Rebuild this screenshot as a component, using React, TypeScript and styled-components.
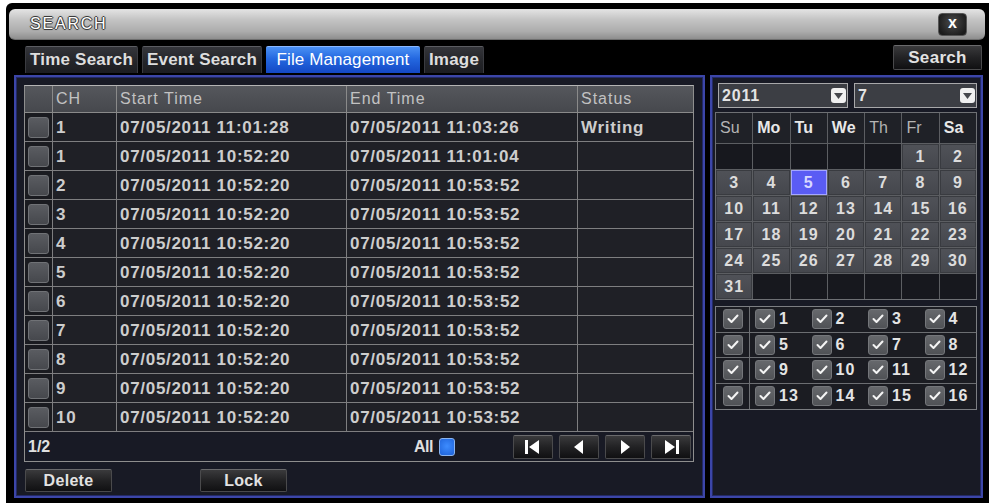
import React from 'react';
import styled, { createGlobalStyle, css } from 'styled-components';

const Global = createGlobalStyle`
  html, body { margin: 0; padding: 0; background: #fff; }
  body { font-family: "Liberation Sans", Arial, sans-serif; overflow: hidden; }
  *, *::before, *::after { box-sizing: border-box; }
`;

const Window = styled.div`
  margin: 3px 0 0 6px;
  width: 983px;
  height: 500px;
  background: #000;
  border-radius: 6px 0 0 0;
  padding: 6px 4px 0 3px;
  display: flex;
  flex-direction: column;
`;

const TitleBar = styled.div`
  height: 31px;
  border-radius: 6px;
  background: linear-gradient(#e4e4e4 0%, #c4c4c4 35%, #acacac 75%, #8e8e8e 100%);
  border-bottom: 1px solid #6e6e6e;
  display: flex;
  align-items: center;
  justify-content: space-between;
  padding: 0 18px 0 21px;
`;

const Title = styled.span`
  font-size: 16px;
  letter-spacing: 1.8px;
  color: #ffffff;
  text-shadow: -1px 0 #3a3a3a, 1px 0 #3a3a3a, 0 -1px #3a3a3a, 0 1px #3a3a3a, 0 0 2px #222;
`;

const CloseButton = styled.div`
  width: 29px;
  height: 23px;
  border-radius: 4px;
  background: radial-gradient(circle at 50% 40%, #4a4a4a, #1c1c1c 80%);
  border: 1px solid #555;
  display: flex;
  align-items: center;
  justify-content: center;
  color: #fff;
  font-weight: bold;
  font-size: 16px;
  line-height: 1;
  padding-bottom: 2px;
`;

const Toolbar = styled.div`
  margin-top: 5px;
  height: 28px;
  display: flex;
  align-items: flex-start;
  padding-left: 16px;
`;

const Tabs = styled.div`
  display: flex;
  gap: 4px;
  margin-top: 1px;
`;

const Tab = styled.div<{ $active?: boolean; $w: number }>`
  width: ${p => p.$w}px;
  height: 27px;
  display: flex;
  align-items: center;
  justify-content: center;
  font-size: 17px;
  white-space: nowrap;
  border-radius: 2px 2px 0 0;
  ${p =>
    p.$active
      ? css`
          background: linear-gradient(#4a90f4 0%, #2468e0 45%, #1448c4 100%);
          color: #fff;
          font-weight: normal;
          letter-spacing: 0.1px;
          border-top: 1px solid #8ab8ff;
        `
      : css`
          background: linear-gradient(#34353a 0%, #232428 60%, #1c1d21 100%);
          color: #dedede;
          font-weight: bold;
          letter-spacing: 0.2px;
          border-top: 1px solid #5c5d62;
          border-left: 1px solid #3a3b40;
          border-right: 1px solid #3a3b40;
        `}
`;

const DarkButton = styled.div<{ $w: number; $h: number }>`
  width: ${p => p.$w}px;
  height: ${p => p.$h}px;
  display: flex;
  align-items: center;
  justify-content: center;
  background: linear-gradient(#3a3a3c 0%, #222224 50%, #101012 100%);
  border: 1px solid #4a4a4c;
  border-top-color: #6a6a6c;
  border-radius: 2px;
  color: #e2e2e2;
  font-weight: bold;
  font-size: 16px;
  letter-spacing: 0.3px;
`;

const SearchButton = styled(DarkButton)`
  margin-left: auto;
  margin-right: 3px;
  font-size: 17px;
`;

const Panels = styled.div`
  margin-top: 2px;
  height: 423px;
  display: flex;
  gap: 5px;
  padding: 0 2px 0 5px;
`;

const Panel = styled.div<{ $w: number }>`
  width: ${p => p.$w}px;
  height: 100%;
  border: 2px solid #3c46a8;
  box-shadow: inset 0 0 0 1px #232a66;
  background: #181a25;
  display: flex;
  flex-direction: column;
`;

const LeftPanel = styled(Panel)`
  padding: 8px 9px 0 8px;
`;

const RightPanel = styled(Panel)`
  padding: 6px 4px 0 3px;
`;

const COLS = '28px 64px 230px 231px 117px';

const Table = styled.div`
  width: 670px;
  border: 1px solid #8e8e8e;
  border-top-color: #b4b4b4;
  border-bottom: none;
  display: flex;
  flex-direction: column;
`;

const HeadRow = styled.div`
  display: grid;
  grid-template-columns: ${COLS};
  height: 27px;
  border-bottom: 1px solid #8a8a8a;
  background: linear-gradient(#55575c, #46484d);
`;

const Row = styled.div`
  display: grid;
  grid-template-columns: ${COLS};
  height: 29px;
  border-bottom: 1px solid #7e7e80;
  background: #1f2026;
`;

const HeadCell = styled.div`
  display: flex;
  align-items: center;
  padding-left: 3px;
  border-right: 1px solid #8a8a8a;
  font-size: 16px;
  letter-spacing: 1px;
  color: #c2c2c2;
  &:last-child { border-right: none; }
`;

const Cell = styled.div<{ $check?: boolean }>`
  display: flex;
  align-items: center;
  padding-left: 3px;
  padding-top: 1px;
  border-right: 1px solid #7e7e80;
  font-size: 17px;
  font-weight: bold;
  letter-spacing: 0.7px;
  color: #cdcdcd;
  white-space: nowrap;
  background: ${p => (p.$check ? '#1a1b20' : 'transparent')};
  &:last-child { border-right: none; }
`;

const RowCheck = styled.div`
  width: 21px;
  height: 21px;
  border-radius: 3px;
  background: linear-gradient(#5a5c61, #46484d);
  border: 1px solid #707276;
`;

const Footer = styled.div`
  height: 30px;
  display: flex;
  align-items: center;
  padding: 0 2px 0 3px;
  border-bottom: 1px solid #8e8e8e;
`;

const PageLabel = styled.span`
  font-size: 16px;
  font-weight: bold;
  color: #e0e0e0;
  margin-right: auto;
`;

const AllGroup = styled.div`
  display: flex;
  align-items: center;
  gap: 6px;
  margin-right: 58px;
  font-size: 16px;
  font-weight: bold;
  letter-spacing: -0.5px;
  color: #e0e0e0;
`;

const BlueCheck = styled.div`
  width: 16px;
  height: 18px;
  border-radius: 3px;
  background: radial-gradient(circle at 50% 45%, #3d8cff, #1e62d8);
  border: 1px solid #8ab4f0;
`;

const Pager = styled.div`
  display: flex;
  gap: 6px;
`;

const BottomButtons = styled.div`
  margin-top: 7px;
  padding-left: 1px;
  display: flex;
  gap: 88px;
`;

const SelectRow = styled.div`
  display: flex;
  gap: 6px;
  padding-left: 3px;
`;

const Select = styled.div<{ $w: number }>`
  width: ${p => p.$w}px;
  height: 25px;
  background: #3c3e44;
  border: 1px solid #a8a8aa;
  display: flex;
  align-items: center;
  justify-content: space-between;
  padding: 0 1px 0 3px;
  font-size: 16px;
  font-weight: bold;
  letter-spacing: 0.8px;
  color: #e4e4e4;
`;

const SelectArrow = styled.div`
  width: 15px;
  height: 15px;
  border-radius: 3px;
  background: #f0f0f0;
  display: flex;
  align-items: center;
  justify-content: center;
`;

const Calendar = styled.div`
  margin-top: 4px;
  width: 262px;
  display: grid;
  grid-template-columns: repeat(7, 1fr);
  grid-template-rows: 30px repeat(6, 25px);
  gap: 1px;
  background: #5c5e62;
  border: 1px solid #6e7074;
`;

const DayName = styled.div<{ $dim?: boolean }>`
  background: #1f2127;
  display: flex;
  align-items: center;
  padding-left: 4px;
  font-size: 16px;
  font-weight: ${p => (p.$dim ? 'normal' : 'bold')};
  color: ${p => (p.$dim ? '#b4b4b4' : '#e8e8e8')};
`;

const Day = styled.div<{ $kind: 'empty' | 'day' | 'sel' }>`
  display: flex;
  align-items: center;
  justify-content: center;
  font-size: 16px;
  font-weight: bold;
  letter-spacing: 1px;
  color: #dcdcdc;
  ${p =>
    p.$kind === 'empty'
      ? css`background: #17181e;`
      : p.$kind === 'sel'
      ? css`
          background: #5a5cf4;
          box-shadow: inset 0 0 0 1px #a4a6ff;
          color: #d8d8ff;
        `
      : css`
          background: linear-gradient(#505258, #45474d);
          box-shadow: inset 0 0 0 1px #393b40;
        `}
`;

const ChannelGrid = styled.div`
  margin-top: 6px;
  width: 262px;
  border: 1px solid #7c7e82;
  background: #1b1c22;
  display: flex;
  flex-direction: column;
`;

const ChannelRow = styled.div`
  display: grid;
  grid-template-columns: 34px repeat(4, 1fr);
  height: 25.5px;
  border-bottom: 1px solid #6c6e72;
  &:last-child { border-bottom: none; }
`;

const ChannelCell = styled.div<{ $first?: boolean }>`
  display: flex;
  align-items: center;
  justify-content: ${p => (p.$first ? 'center' : 'flex-start')};
  padding-left: ${p => (p.$first ? '0' : '5px')};
  gap: 4px;
  border-right: ${p => (p.$first ? '1px solid #6c6e72' : 'none')};
  font-size: 16px;
  font-weight: bold;
  letter-spacing: 1px;
  color: #e4e4e4;
`;

const CheckBox = styled.div`
  width: 20px;
  height: 20px;
  border-radius: 3px;
  background: linear-gradient(#66686c, #505256);
  border: 1px solid #74767a;
  display: flex;
  align-items: center;
  justify-content: center;
`;

const Check = () => (
  <CheckBox>
    <svg width="12" height="10" viewBox="0 0 12 10">
      <polyline points="1.5,5 4.5,8 10.5,1.5" fill="none" stroke="#f4f4f4" strokeWidth="2" strokeLinecap="round" strokeLinejoin="round" />
    </svg>
  </CheckBox>
);

const Arrow = () => (
  <SelectArrow>
    <svg width="9" height="6" viewBox="0 0 9 6">
      <polygon points="0,0 9,0 4.5,6" fill="#45474c" />
    </svg>
  </SelectArrow>
);

const PagerIcon = ({ kind }: { kind: 'first' | 'prev' | 'next' | 'last' }) => (
  <svg width="20" height="16" viewBox="0 0 20 16">
    {kind === 'first' && (
      <>
        <rect x="2" y="1" width="3" height="14" fill="#fff" />
        <polygon points="16,1 16,15 6,8" fill="#fff" />
      </>
    )}
    {kind === 'prev' && <polygon points="14,1 14,15 5,8" fill="#fff" />}
    {kind === 'next' && <polygon points="6,1 6,15 15,8" fill="#fff" />}
    {kind === 'last' && (
      <>
        <polygon points="4,1 4,15 14,8" fill="#fff" />
        <rect x="15" y="1" width="3" height="14" fill="#fff" />
      </>
    )}
  </svg>
);

const rows: [string, string, string, string][] = [
  ['1', '07/05/2011 11:01:28', '07/05/2011 11:03:26', 'Writing'],
  ['1', '07/05/2011 10:52:20', '07/05/2011 11:01:04', ''],
  ...['2', '3', '4', '5', '6', '7', '8', '9', '10'].map(
    ch => [ch, '07/05/2011 10:52:20', '07/05/2011 10:53:52', ''] as [string, string, string, string]
  ),
];

const dayNames: { n: string; dim?: boolean }[] = [
  { n: 'Su', dim: true },
  { n: 'Mo' },
  { n: 'Tu' },
  { n: 'We' },
  { n: 'Th', dim: true },
  { n: 'Fr', dim: true },
  { n: 'Sa' },
];

// July 2011 starts on Friday
const cells: (number | null)[] = [];
for (let i = 0; i < 5; i++) cells.push(null);
for (let d = 1; d <= 31; d++) cells.push(d);
while (cells.length < 42) cells.push(null);

const channelRows = [
  [1, 2, 3, 4],
  [5, 6, 7, 8],
  [9, 10, 11, 12],
  [13, 14, 15, 16],
];

export default function App() {
  return (
    <>
      <Global />
      <Window>
        <TitleBar>
          <Title>SEARCH</Title>
          <CloseButton>x</CloseButton>
        </TitleBar>
        <Toolbar>
          <Tabs>
            <Tab $w={113}>Time Search</Tab>
            <Tab $w={120}>Event Search</Tab>
            <Tab $w={154} $active>File Management</Tab>
            <Tab $w={60}>Image</Tab>
          </Tabs>
          <SearchButton $w={89} $h={25}>Search</SearchButton>
        </Toolbar>
        <Panels>
          <LeftPanel $w={691}>
            <Table>
              <HeadRow>
                <HeadCell />
                <HeadCell>CH</HeadCell>
                <HeadCell>Start Time</HeadCell>
                <HeadCell>End Time</HeadCell>
                <HeadCell>Status</HeadCell>
              </HeadRow>
              {rows.map((r, i) => (
                <Row key={i}>
                  <Cell $check>
                    <RowCheck />
                  </Cell>
                  <Cell>{r[0]}</Cell>
                  <Cell>{r[1]}</Cell>
                  <Cell>{r[2]}</Cell>
                  <Cell>{r[3]}</Cell>
                </Row>
              ))}
              <Footer>
                <PageLabel>1/2</PageLabel>
                <AllGroup>
                  All
                  <BlueCheck />
                </AllGroup>
                <Pager>
                  <DarkButton $w={40} $h={24}><PagerIcon kind="first" /></DarkButton>
                  <DarkButton $w={40} $h={24}><PagerIcon kind="prev" /></DarkButton>
                  <DarkButton $w={40} $h={24}><PagerIcon kind="next" /></DarkButton>
                  <DarkButton $w={40} $h={24}><PagerIcon kind="last" /></DarkButton>
                </Pager>
              </Footer>
            </Table>
            <BottomButtons>
              <DarkButton $w={87} $h={23}>Delete</DarkButton>
              <DarkButton $w={87} $h={23}>Lock</DarkButton>
            </BottomButtons>
          </LeftPanel>
          <RightPanel $w={273}>
            <SelectRow>
              <Select $w={130}>
                2011
                <Arrow />
              </Select>
              <Select $w={123}>
                7
                <Arrow />
              </Select>
            </SelectRow>
            <Calendar>
              {dayNames.map(d => (
                <DayName key={d.n} $dim={d.dim}>{d.n}</DayName>
              ))}
              {cells.map((d, i) => (
                <Day key={i} $kind={d === null ? 'empty' : d === 5 ? 'sel' : 'day'}>
                  {d ?? ''}
                </Day>
              ))}
            </Calendar>
            <ChannelGrid>
              {channelRows.map((r, i) => (
                <ChannelRow key={i}>
                  <ChannelCell $first>
                    <Check />
                  </ChannelCell>
                  {r.map(n => (
                    <ChannelCell key={n}>
                      <Check />
                      {n}
                    </ChannelCell>
                  ))}
                </ChannelRow>
              ))}
            </ChannelGrid>
          </RightPanel>
        </Panels>
      </Window>
    </>
  );
}
